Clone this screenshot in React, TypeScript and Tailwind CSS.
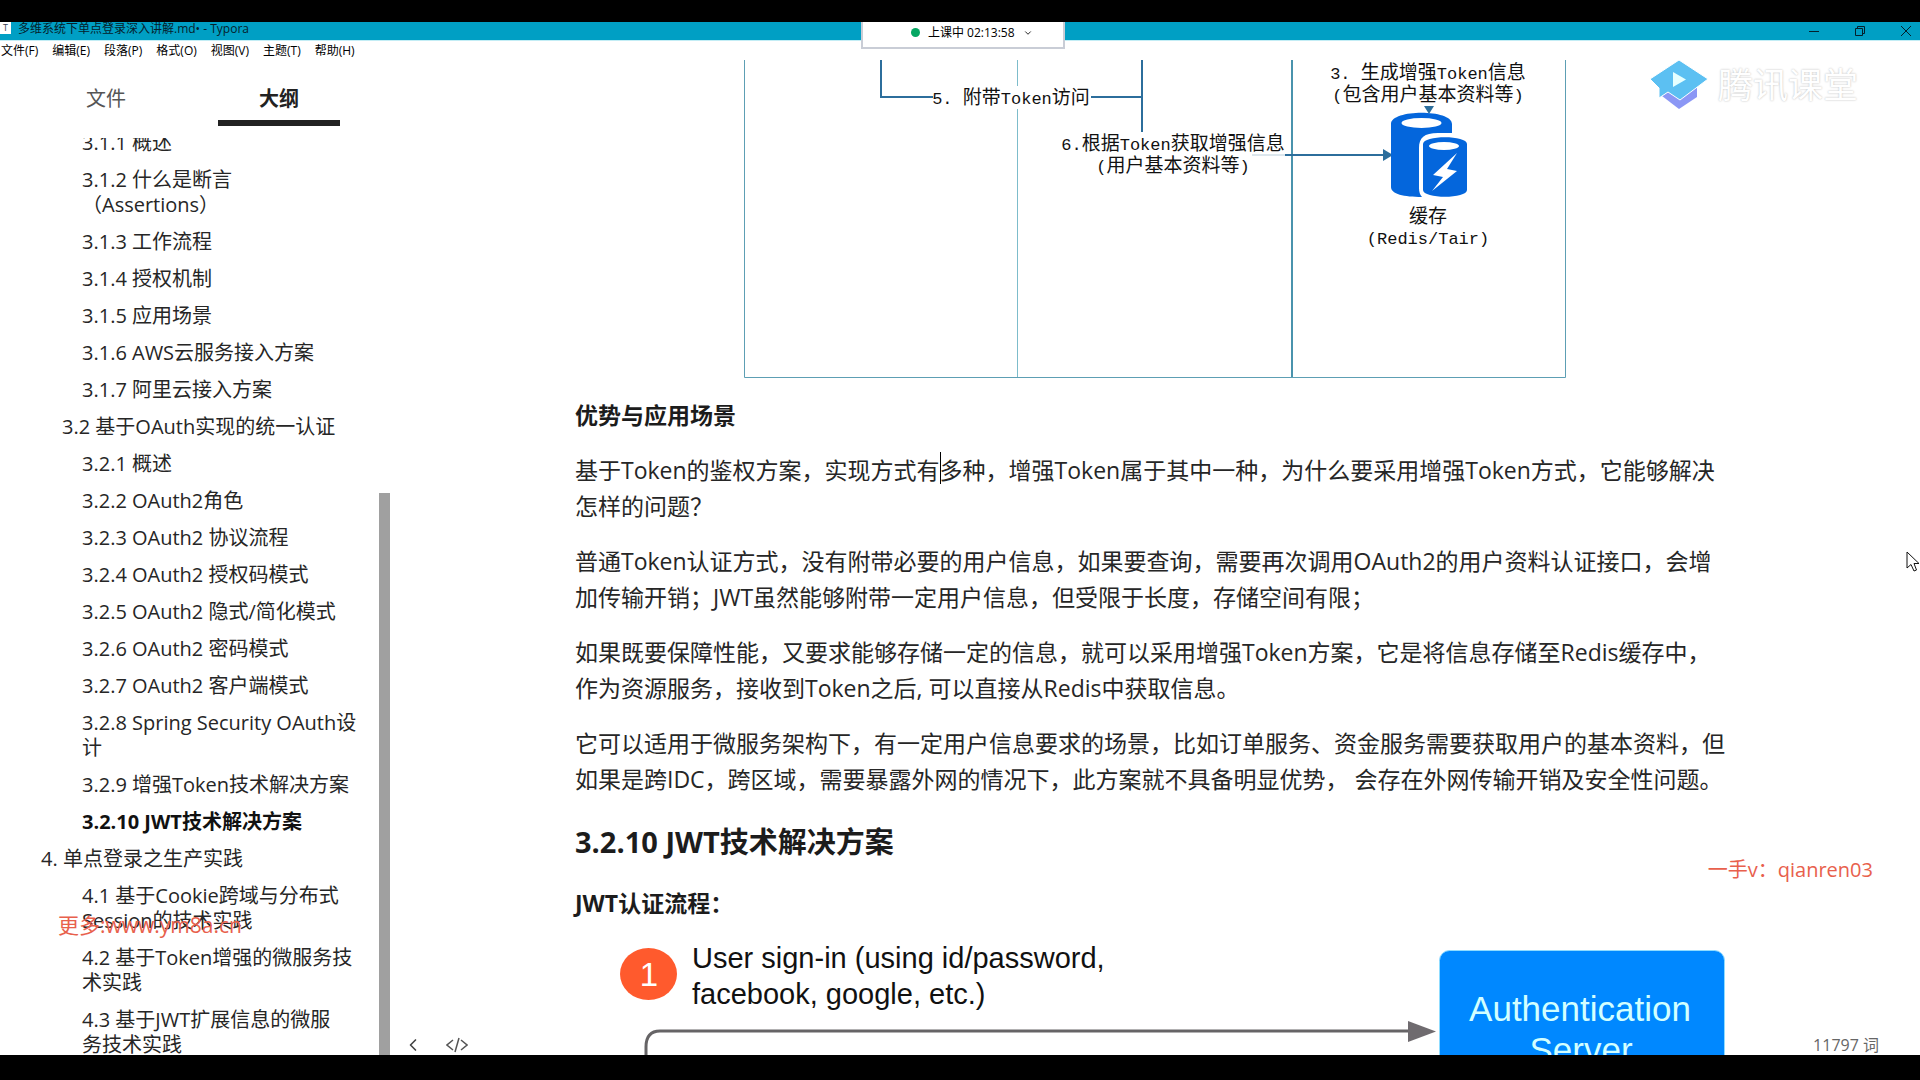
import React, { useState } from 'react';
import { ChevronDown, ChevronLeft } from 'lucide-react';

interface OutlineItem {
  title: string;
  level: 1 | 2 | 3;
  active?: boolean;
}

const MENUS = ['文件(F)', '编辑(E)', '段落(P)', '格式(O)', '视图(V)', '主题(T)', '帮助(H)'];

const OUTLINE: OutlineItem[] = [
  { title: '3.1.1 概述', level: 3 },
  { title: '3.1.2 什么是断言\n（Assertions）', level: 3 },
  { title: '3.1.3 工作流程', level: 3 },
  { title: '3.1.4 授权机制', level: 3 },
  { title: '3.1.5 应用场景', level: 3 },
  { title: '3.1.6 AWS云服务接入方案', level: 3 },
  { title: '3.1.7 阿里云接入方案', level: 3 },
  { title: '3.2 基于OAuth实现的统一认证', level: 2 },
  { title: '3.2.1 概述', level: 3 },
  { title: '3.2.2 OAuth2角色', level: 3 },
  { title: '3.2.3 OAuth2 协议流程', level: 3 },
  { title: '3.2.4 OAuth2 授权码模式', level: 3 },
  { title: '3.2.5 OAuth2 隐式/简化模式', level: 3 },
  { title: '3.2.6 OAuth2 密码模式', level: 3 },
  { title: '3.2.7 OAuth2 客户端模式', level: 3 },
  { title: '3.2.8 Spring Security OAuth设\n计', level: 3 },
  { title: '3.2.9 增强Token技术解决方案', level: 3 },
  { title: '3.2.10 JWT技术解决方案', level: 3, active: true },
  { title: '4. 单点登录之生产实践', level: 1 },
  { title: '4.1 基于Cookie跨域与分布式\nSession的技术实践', level: 3 },
  { title: '4.2 基于Token增强的微服务技\n术实践', level: 3 },
  { title: '4.3 基于JWT扩展信息的微服\n务技术实践', level: 3 },
];

const INDENT = {
  1: 'pl-[41px]',
  2: 'pl-[62px]',
  3: 'pl-[82px]',
};

const TitleBar: React.FC = () => (
  <header className="relative flex h-[18px] shrink-0 items-center bg-[#009fc4] text-xs text-[#06212b]">
    <span className="flex h-3 w-[11px] items-center justify-center self-start bg-white text-[9px] text-gray-700">T</span>
    <h1 className="ml-[7px] flex-1 self-start leading-[14px]">多维系统下单点登录深入讲解.md• - Typora</h1>
    <div className="flex items-center gap-9 pr-[9px]">
      <button aria-label="最小化">
        <svg width="10" height="10" viewBox="0 0 10 10" stroke="#04202c" fill="none">
          <path d="M0 5.5h10" />
        </svg>
      </button>
      <button aria-label="还原">
        <svg width="10" height="10" viewBox="0 0 10 10" stroke="#04202c" fill="none">
          <path d="M0.5 2.5h7v7h-7zM2.5 2.5v-2h7v7h-2" />
        </svg>
      </button>
      <button aria-label="关闭">
        <svg width="10" height="10" viewBox="0 0 10 10" stroke="#04202c" fill="none">
          <path d="M0 0l10 10M10 0L0 10" />
        </svg>
      </button>
    </div>
  </header>
);

const ClassStatus: React.FC = () => (
  <button className="absolute top-[22px] left-[861px] z-20 flex h-[27px] w-[204px] items-center gap-2 border-2 border-t-0 border-[#c9cdd6] bg-white pb-1 pl-12 text-xs text-black">
    <span className="size-[9px] rounded-full bg-[#06a763]" />
    <span>上课中 02:13:58</span>
    <ChevronDown size={10} />
  </button>
);

const Sidebar: React.FC = () => {
  const [tab, setTab] = useState('outline');

  const tabClass = (active: boolean) =>
    `h-[53px] w-[122px] border-b-[6px] pt-1 text-xl ${
      active ? 'border-[#222222] font-bold text-[#222222]' : 'border-transparent text-[#555555]'
    }`;

  return (
    <aside className="relative flex w-[390px] shrink-0 flex-col">
      <div className="flex gap-[51px] pt-[13px] pl-[45px]">
        <button className={tabClass(tab === 'files')} onClick={() => setTab('files')}>文件</button>
        <button className={tabClass(tab === 'outline')} onClick={() => setTab('outline')}>大纲</button>
      </div>
      <nav className="mt-3 min-h-0 flex-1 overflow-hidden">
        <ul className="-mt-[14px] text-xl leading-[25px] whitespace-pre text-[#262626]">
          {OUTLINE.map((item) => (
            <li key={item.title} className={`py-[6px] ${INDENT[item.level]} ${item.active ? 'font-bold text-[#111111]' : ''}`}>
              <a href="#" className="block">{item.title}</a>
            </li>
          ))}
        </ul>
      </nav>
      <div className="absolute right-0 bottom-0 h-[562px] w-[11px] bg-[#a0a0a0]" />
    </aside>
  );
};

interface LabelProps {
  x: number;
  y: number;
  text: string;
}

const DiagramLabel: React.FC<LabelProps> = ({ x, y, text }) => (
  <text x={x} y={y} textAnchor="middle" xmlSpace="preserve" fill="#111111">
    {(text.match(/[\x20-\x7e]+|[^\x20-\x7e]+/g) || []).map((run, i) => (
      <tspan key={i} className={/^[\x20-\x7e]/.test(run) ? "font-['Liberation_Mono',monospace] text-[17px]" : 'text-[19px]'}>
        {run}
      </tspan>
    ))}
  </text>
);

const TokenDiagram: React.FC = () => (
  <svg width="823" height="319" viewBox="0 0 823 319" className="mx-auto block" role="img" aria-label="增强Token流程">
    <g fill="none" strokeWidth="1">
      <path d="M0.5 0V317.500H821.500V0" stroke="#5d9fb4" />
      <path d="M273.500 0V26M273.500 49V317" stroke="#7dbccb" />
      <path d="M548 0V317" stroke="#4a93ad" strokeWidth="2" />
    </g>
    <g fill="none" stroke="#2c6e9c" strokeWidth="2">
      <path d="M137 0V37H189M347 37H398M398 0V72" />
      <path d="M541 95H642" />
    </g>
    <path d="M508 95H541" stroke="#b9cedb" />
    <path d="M639 89L649 95L639 101Z" fill="#2c6e9c" />
    <path d="M680 46H690L685 54Z" fill="#2c6e9c" />

    <DiagramLabel x={267} y={44} text="5. 附带Token访问" />
    <DiagramLabel x={429} y={90} text="6.根据Token获取增强信息" />
    <DiagramLabel x={429} y={112} text="(用户基本资料等)" />
    <DiagramLabel x={684} y={19} text="3. 生成增强Token信息" />
    <DiagramLabel x={684} y={41} text="(包含用户基本资料等)" />

    <path d="M647 64C647 49 708 49 708 64V73H694C680 73 675 78 675 88V128C675 132 676 135 678 137C660 137 647 134 647 127Z" fill="#0466dc" />
    <ellipse cx="677.500" cy="63" rx="20" ry="5" fill="#ffffff" />
    <path d="M679 84C679 75 723 75 723 84V130C723 139 679 139 679 130Z" fill="#0466dc" />
    <ellipse cx="700" cy="86" rx="15" ry="4" fill="#ffffff" />
    <path d="M713 93L689 115L699 117L688 131L713 111L703 109Z" fill="#ffffff" />

    <DiagramLabel x={684} y={163} text="缓存" />
    <DiagramLabel x={684} y={184} text="(Redis/Tair)" />
  </svg>
);

const JwtDiagram: React.FC = () => (
  <svg width="1160" height="180" viewBox="0 0 1160 180" className="block font-['Liberation_Sans',sans-serif]" role="img" aria-label="JWT认证流程">
    <ellipse cx="73.500" cy="34" rx="28.500" ry="26" fill="#ff5a2d" />
    <text x="74" y="46" textAnchor="middle" className="text-[33px]" fill="#ffffff">1</text>
    <g className="text-[29px]" fill="#111111">
      <text x="117" y="28">User sign-in (using id/password,</text>
      <text x="117" y="64">facebook, google, etc.)</text>
    </g>
    <path d="M71 180V107Q71 91 85 91H835" fill="none" stroke="#666466" strokeWidth="3" />
    <path d="M833 81L861 91.500L833 102Z" fill="#6f6b6f" />
    <rect x="864.500" y="10.500" width="285" height="180" rx="10" fill="#0088ff" stroke="#8fdcff" />
    <g className="text-[35px]" textAnchor="middle" fill="#d2ffff">
      <text x="1005" y="81">Authentication</text>
      <text x="1006" y="122">Server</text>
    </g>
  </svg>
);

const Article: React.FC = () => (
  <article className="mx-auto w-full max-w-[1160px] text-[23px] leading-9 whitespace-nowrap text-[#262626]">
    <TokenDiagram />
    <h4 className="mt-[18px] mb-[19px] font-bold text-[#1c1c1c]">优势与应用场景</h4>
    <p className="mb-[19px]">
      基于Token的鉴权方案，实现方式有
      <span className="relative">
        <span className="absolute -top-[2px] left-0 h-8 w-px bg-black" />
        多种
      </span>
      ，增强Token属于其中一种，为什么要采用增强Token方式，它能够解决
      <br />
      怎样的问题？
    </p>
    <p className="mb-[19px]">
      普通Token认证方式，没有附带必要的用户信息，如果要查询，需要再次调用OAuth2的用户资料认证接口，会增
      <br />
      加传输开销；JWT虽然能够附带一定用户信息，但受限于长度，存储空间有限；
    </p>
    <p className="mb-[19px]">
      如果既要保障性能，又要求能够存储一定的信息，就可以采用增强Token方案，它是将信息存储至Redis缓存中，
      <br />
      作为资源服务，接收到Token之后, 可以直接从Redis中获取信息。
    </p>
    <p className="mb-[23px]">
      它可以适用于微服务架构下，有一定用户信息要求的场景，比如订单服务、资金服务需要获取用户的基本资料，但
      <br />
      如果是跨IDC，跨区域，需要暴露外网的情况下，此方案就不具备明显优势， 会存在外网传输开销及安全性问题。
    </p>
    <h3 className="mb-[21px] text-[29px] leading-11 font-bold text-[#1c1c1c]">3.2.10 JWT技术解决方案</h3>
    <h4 className="mb-[19px] font-bold text-[#1c1c1c]">JWT认证流程：</h4>
    <JwtDiagram />
  </article>
);

const ClassroomLogo: React.FC = () => (
  <div className="absolute top-[59px] right-[62px] flex items-center gap-[9px]">
    <svg width="60" height="52" viewBox="0 0 60 52" aria-hidden="true">
      <path d="M13 37L29 26L48 29V38L30 50Z" fill="#8b97f5" />
      <path d="M30 1L59 20L31 41L19 33L10 39V29L1 20Z" fill="#5cc0f2" stroke="#ffffff" strokeWidth="1" />
      <path d="M24 13L37 20.500L24 28Z" fill="#e6ffff" />
    </svg>
    <span className="text-[35px] leading-[52px] text-white text-shadow-[0_0_2px_#b4b4b4]">腾讯课堂</span>
  </div>
);

export default function App() {
  return (
    <div className="relative h-screen overflow-hidden bg-black pt-[22px] pb-[25px] font-['Open_Sans','Noto_Sans_CJK_SC',sans-serif]">
      <div className="flex h-full flex-col bg-white">
        <TitleBar />
        <nav className="flex h-5 shrink-0 items-center gap-[14px] border-t border-[#c3edf5] pl-px text-xs text-black">
          {MENUS.map((menu) => (
            <button key={menu}>{menu}</button>
          ))}
        </nav>
        <div className="flex min-h-0 flex-1">
          <Sidebar />
          <main className="relative min-w-0 flex-1 overflow-hidden">
            <Article />
            <footer className="absolute inset-x-0 bottom-0 flex h-5 items-center pr-[41px] pl-[13px] text-[#444444]">
              <button aria-label="收起侧边栏">
                <ChevronLeft size={20} />
              </button>
              <button aria-label="源代码模式" className="ml-[23px]">
                <svg width="22" height="16" viewBox="0 0 22 16" fill="none" stroke="#555555" strokeWidth="1.500">
                  <path d="M7 3L1 8L7 13M15 3L21 8L15 13M13 1L9 15" />
                </svg>
              </button>
              <span className="ml-auto text-base leading-5 text-[#666666]">11797 词</span>
            </footer>
          </main>
        </div>
      </div>

      <ClassStatus />
      <ClassroomLogo />
      <p className="absolute top-[910px] left-[58px] text-[21px] leading-[30px] text-[#e8604c]">更多:www.ym8a.cn</p>
      <p className="absolute top-[855px] right-[47px] text-xl leading-[30px] text-[#e8604c]">一手v：qianren03</p>
      <svg width="14" height="21" viewBox="0 0 14 21" className="absolute top-[551px] right-0" aria-hidden="true">
        <path d="M1 1V17L5 13.500L8 20L10.500 19L8 12.500H13Z" fill="#ffffff" stroke="#111111" />
      </svg>
    </div>
  );
}
